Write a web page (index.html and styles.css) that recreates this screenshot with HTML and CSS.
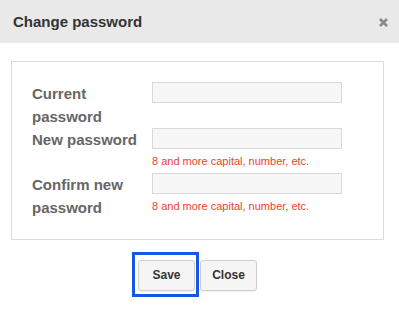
FILE: index.html
```html
<!DOCTYPE html>
<html>
<head>
<meta charset="utf-8">
<link rel="stylesheet" href="styles.css">
</head>
<body>
<div class="header">
  <h1 class="title">Change password</h1>
  <span class="close-x"><svg width="9" height="9" viewBox="0 0 9 9"><path d="M1 1L8 8M8 1L1 8" stroke="#8a8a8a" stroke-width="2.6" stroke-linecap="butt"/></svg></span>
</div>
<div class="panel">
  <div class="form">
    <label class="label">Current password</label>
    <div class="field"><input class="input" type="password"></div>
    <label class="label">New password</label>
    <div class="field"><input class="input" type="password"><div class="hint">8 and more capital, number, etc.</div></div>
    <label class="label">Confirm new password</label>
    <div class="field"><input class="input" type="password"><div class="hint">8 and more capital, number, etc.</div></div>
  </div>
</div>
<div class="actions">
  <div class="focus-wrap"><button class="btn">Save</button></div>
  <button class="btn">Close</button>
</div>
</body>
</html>
```
FILE: styles.css
```css
html, body {
  margin: 0;
  padding: 0;
  background: #fff;
  font-family: "Liberation Sans", Arial, sans-serif;
}
body {
  min-height: 311px;
}
.header {
  height: 43px;
  background: #e9e9e9;
  display: flex;
  align-items: center;
  justify-content: space-between;
  padding: 0 11px 0 13px;
}
.title {
  margin: 0;
  font-size: 15px;
  font-weight: bold;
  line-height: 43px;
  color: #333;
}
.close-x {
  display: flex;
  width: 9px;
  height: 9px;
  margin-top: 1px;
}
.panel {
  margin: 18px 15px 0 11px;
  border: 1px solid #dcdcdc;
  padding: 20px;
}
.form {
  display: grid;
  grid-template-columns: 120px 190px;
  align-items: start;
}
.label {
  font-size: 15px;
  font-weight: bold;
  line-height: 23px;
  color: #666;
}
.field {
  display: flex;
  flex-direction: column;
}
.input {
  display: block;
  box-sizing: border-box;
  width: 190px;
  height: 21px;
  margin: 0;
  border: 1px solid #d9d9d9;
  background: #f7f7f7;
  padding: 0 4px;
  outline: none;
}
.hint {
  font-size: 11px;
  line-height: 15px;
  margin-top: 5px;
  margin-bottom: 4px;
  color: #e8442e;
}
.actions {
  margin: 20px 15px 0 11px;
  padding-bottom: 14px;
  display: flex;
  justify-content: center;
  gap: 5px;
}
.focus-wrap {
  position: relative;
  display: flex;
}
.focus-wrap::after {
  content: "";
  position: absolute;
  top: -8px;
  left: -6px;
  right: -4px;
  bottom: -6px;
  border: 3px solid #1457e8;
  pointer-events: none;
}
.btn {
  box-sizing: border-box;
  width: 57px;
  height: 31px;
  padding: 0 0 1px;
  margin: 0;
  border: 1px solid #cfcfcf;
  border-radius: 3px;
  background: #f5f5f5;
  color: #333;
  font-family: "Liberation Sans", Arial, sans-serif;
  font-size: 12px;
  font-weight: bold;
  box-shadow: 0 1px 1px rgba(0,0,0,0.06);
}
```
